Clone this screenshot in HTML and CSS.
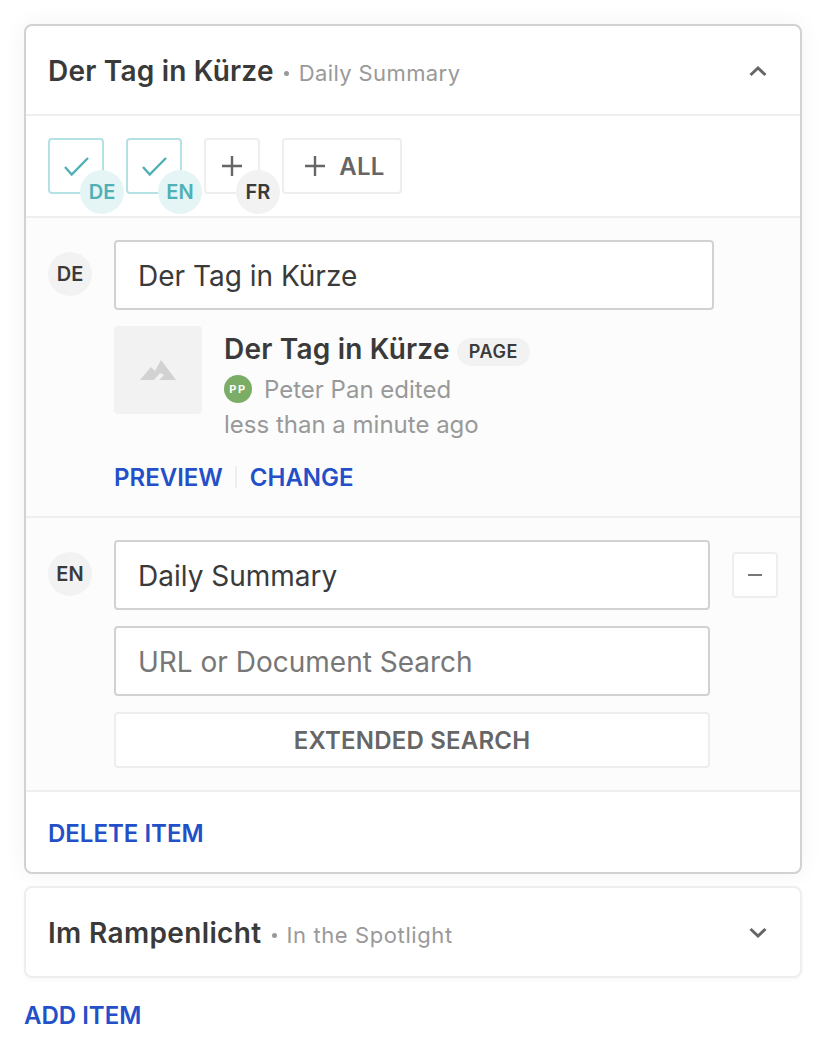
FILE: index.html
```html
<!DOCTYPE html>
<html lang="en">
<head>
    <meta charset="UTF-8">
    <meta name="viewport" content="width=device-width, initial-scale=1.0">
    <title>Link List</title>
    <link rel="stylesheet" href="styles.css">
</head>
<body>
    <div class="card card-open">
        <div class="card-header">
            <span class="card-title">Der Tag in Kürze</span>
            <span class="card-dot"></span>
            <span class="card-sub">Daily Summary</span>
            <svg class="chevron" width="20" height="12" viewBox="0 0 20 12"><path d="M2.5 10 L10 3 L17.5 10" fill="none" stroke="#666" stroke-width="3"/></svg>
        </div>

        <div class="toolbar">
            <button class="toggle toggle-on">
                <svg width="28" height="22" viewBox="0 0 28 22"><path d="M3 12 L9.7 19.5 L26 3" fill="none" stroke="#4fb0b5" stroke-width="2.4"/></svg>
                <span class="badge badge-on toggle-badge">DE</span>
            </button>
            <button class="toggle toggle-on">
                <svg width="28" height="22" viewBox="0 0 28 22"><path d="M3 12 L9.7 19.5 L26 3" fill="none" stroke="#4fb0b5" stroke-width="2.4"/></svg>
                <span class="badge badge-on toggle-badge">EN</span>
            </button>
            <button class="toggle">
                <svg width="20" height="20" viewBox="0 0 20 20"><path d="M10 0 V20 M0 10 H20" stroke="#666" stroke-width="2.4"/></svg>
                <span class="badge toggle-badge">FR</span>
            </button>
            <button class="toggle toggle-all">
                <svg width="20" height="20" viewBox="0 0 20 20"><path d="M10 0 V20 M0 10 H20" stroke="#666" stroke-width="2.4"/></svg>
                ALL
            </button>
        </div>

        <div class="lang-row">
            <span class="badge lang-badge">DE</span>
            <div class="lang-fields">
                <input class="field field-wide" type="text" value="Der Tag in Kürze">
                <div class="doc">
                    <div class="doc-thumb">
                        <svg width="36" height="20" viewBox="0 0 36 20"><path d="M0 20 L11 7 L15 11 L21 0 L36 20 H19 L24 15 L20 13 L14 20 Z" fill="#d2d2d2"/></svg>
                    </div>
                    <div class="doc-info">
                        <div class="doc-title-line">
                            <span class="doc-title">Der Tag in Kürze</span>
                            <span class="pill">PAGE</span>
                        </div>
                        <div class="doc-meta">
                            <span class="avatar">PP</span>
                            Peter Pan edited
                        </div>
                        <div class="doc-time">less than a minute ago</div>
                    </div>
                </div>
                <div class="doc-links">
                    <a class="link" href="#">PREVIEW</a>
                    <span class="doc-sep"></span>
                    <a class="link" href="#">CHANGE</a>
                </div>
            </div>
        </div>

        <div class="lang-row lang-row-en">
            <span class="badge lang-badge">EN</span>
            <div class="lang-fields lang-fields-fill">
                <input class="field" type="text" value="Daily Summary">
                <input class="field" type="text" placeholder="URL or Document Search">
                <button class="search-btn">EXTENDED SEARCH</button>
            </div>
            <button class="minus-btn">
                <svg width="14" height="2" viewBox="0 0 14 2"><path d="M0 1 H14" stroke="#777" stroke-width="2"/></svg>
            </button>
        </div>

        <div class="card-footer">
            <a class="link" href="#">DELETE ITEM</a>
        </div>
    </div>

    <div class="card card-closed">
        <div class="card-header card-header-closed">
            <span class="card-title">Im Rampenlicht</span>
            <span class="card-dot"></span>
            <span class="card-sub">In the Spotlight</span>
            <svg class="chevron" width="20" height="12" viewBox="0 0 20 12"><path d="M2.5 2 L10 9 L17.5 2" fill="none" stroke="#666" stroke-width="3"/></svg>
        </div>
    </div>

    <a class="link add-item" href="#">ADD ITEM</a>
</body>
</html>
```

FILE: styles.css
```css
* {
    box-sizing: border-box;
}
body {
    margin: 0;
    padding: 24px 23px 0 24px;
    font-family: Inter, "Noto Sans", sans-serif;
    color: #3a3a3a;
    background: #fff;
}
button {
    font-family: inherit;
}
.card {
    background: #fff;
    border: 2px solid #eee;
    border-radius: 8px;
    box-shadow: 0 2px 4px rgba(0, 0, 0, 0.03);
}
.card-open {
    border-color: #d2d2d2;
    box-shadow: 0 0 24px rgba(0, 0, 0, 0.05);
}
.card-closed {
    margin-top: 12px;
}

/* header */
.card-header {
    display: flex;
    align-items: center;
    height: 90px;
    padding: 0 22px;
    border-bottom: 2px solid #eee;
}
.card-header-closed {
    height: 88px;
    border-bottom: 0;
}
.card-title {
    margin-top: 2px;
    font-size: 28px;
    font-weight: 600;
    letter-spacing: 0.2px;
}
.card-dot {
    width: 5px;
    height: 5px;
    margin: 6px 10px 0;
    border-radius: 50%;
    background: #999;
}
.card-sub {
    margin-top: 5px;
    font-size: 22px;
    letter-spacing: 0.4px;
    color: #999;
}
.card-header-closed .card-title {
    letter-spacing: 0.35px;
}
.card-header-closed .card-sub {
    letter-spacing: 0.6px;
}
.chevron {
    margin: 2px 10px 0 auto;
}

/* language toggles */
.toolbar {
    display: flex;
    gap: 22px;
    height: 102px;
    padding: 22px 22px 0;
    border-bottom: 2px solid #eee;
}
.toggle {
    position: relative;
    display: flex;
    align-items: center;
    justify-content: center;
    width: 56px;
    height: 56px;
    padding: 0;
    background: #fff;
    border: 2px solid #eee;
    border-radius: 4px;
}
.toggle-on {
    border-color: #b3e1e4;
}
.toggle-all {
    width: 120px;
    gap: 14px;
    padding-left: 6px;
    font-size: 24px;
    font-weight: 600;
    letter-spacing: 0.3px;
    color: #666;
}
.badge {
    display: flex;
    align-items: center;
    justify-content: center;
    flex: none;
    width: 44px;
    height: 44px;
    border-radius: 50%;
    background: #f2f2f2;
    color: #3a3a3a;
    font-size: 20px;
    font-weight: 600;
}
.badge-on {
    background: #e5f5f6;
    color: #4fb0b5;
}
.toggle-badge {
    position: absolute;
    left: 30px;
    top: 30px;
}

/* language rows */
.lang-row {
    display: flex;
    align-items: flex-start;
    padding: 22px 22px 0;
    height: 300px;
    background: #fcfcfc;
    border-bottom: 2px solid #eee;
}
.lang-row-en {
    height: 274px;
}
.lang-badge {
    margin-top: 12px;
    margin-right: 22px;
}
.lang-fields-fill {
    flex: 1;
    display: flex;
    flex-direction: column;
    gap: 16px;
}
.field {
    display: block;
    width: 100%;
    height: 70px;
    padding: 1px 22px 0;
    font-family: inherit;
    font-size: 28px;
    color: #3a3a3a;
    background: #fff;
    border: 2px solid #d2d2d2;
    border-radius: 4px;
}
.field-wide {
    width: 600px;
}
.field::placeholder {
    color: #777;
    opacity: 1;
}
.search-btn {
    height: 56px;
    font-size: 24px;
    font-weight: 600;
    letter-spacing: 0.2px;
    color: #666;
    background: #fff;
    border: 2px solid #eee;
    border-radius: 4px;
}
.minus-btn {
    display: flex;
    align-items: center;
    justify-content: center;
    flex: none;
    width: 46px;
    height: 46px;
    margin: 12px 0 0 22px;
    padding: 0;
    background: #fff;
    border: 2px solid #eee;
    border-radius: 4px;
}

/* selected document */
.doc {
    display: flex;
    gap: 22px;
    margin-top: 16px;
}
.doc-thumb {
    display: flex;
    align-items: center;
    justify-content: center;
    width: 88px;
    height: 88px;
    background: #f2f2f2;
    border-radius: 4px;
}
.doc-title-line {
    display: flex;
    align-items: center;
    gap: 7px;
    height: 45px;
}
.doc-title {
    font-size: 28px;
    font-weight: 600;
    letter-spacing: 0.2px;
}
.pill {
    height: 28px;
    margin-top: 7px;
    padding: 0 12px;
    line-height: 28px;
    font-size: 18px;
    font-weight: 600;
    letter-spacing: 0.6px;
    background: #f2f2f2;
    border-radius: 14px;
}
.doc-meta {
    display: flex;
    align-items: center;
    gap: 12px;
    height: 36px;
    font-size: 24px;
    color: #999;
}
.avatar {
    display: flex;
    align-items: center;
    justify-content: center;
    width: 28px;
    height: 28px;
    border-radius: 50%;
    background: #7bad66;
    color: #fff;
    font-size: 11px;
    font-weight: 700;
    letter-spacing: 1.5px;
}
.doc-time {
    height: 36px;
    line-height: 36px;
    font-size: 24px;
    color: #999;
}
.doc-links {
    display: flex;
    align-items: center;
    gap: 12.5px;
    margin-top: 20px;
}
.doc-sep {
    width: 2px;
    height: 22px;
    margin-top: -2px;
    background: #eee;
}
.link {
    font-size: 24px;
    font-weight: 600;
    color: #2350c8;
    text-decoration: none;
}

/* footer */
.card-footer {
    display: flex;
    align-items: center;
    height: 80px;
    padding: 2px 22px 0;
}
.add-item {
    display: block;
    margin-top: 23px;
}
```
